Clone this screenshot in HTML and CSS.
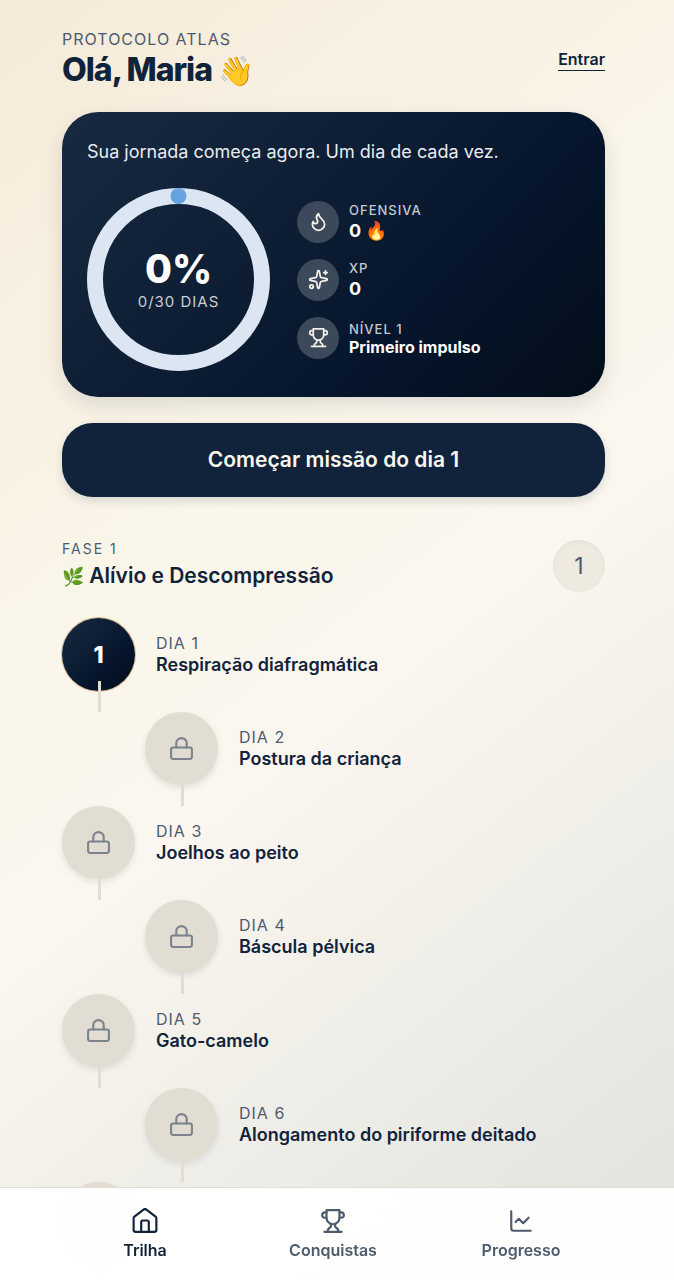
FILE: index.html
```html
<!DOCTYPE html>
<html lang="pt-BR">
<head>
<meta charset="utf-8">
<meta name="viewport" content="width=device-width, initial-scale=1">
<title>Protocolo Atlas</title>
<link rel="stylesheet" href="styles.css">
</head>
<body>
<svg class="sprite" aria-hidden="true">
  <symbol id="i-lock" viewBox="0 0 24 24"><rect x="2" y="11" width="20" height="11" rx="2"/><path d="M7 11V7a5 5 0 0 1 10 0v4"/></symbol>
  <symbol id="i-trophy" viewBox="0 0 24 24"><path d="M6 9H4.500a2.500 2.500 0 0 1 0-5H6"/><path d="M18 9h1.500a2.500 2.500 0 0 0 0-5H18"/><path d="M4 22h16"/><path d="M10 14.660V17c0 .55-.47.98-.97 1.210C7.850 18.750 7 20.240 7 22"/><path d="M14 14.660V17c0 .55.47.98.97 1.210C16.150 18.750 17 20.240 17 22"/><path d="M18 2H6v7a6 6 0 0 0 12 0V2Z"/></symbol>
  <symbol id="i-flame" viewBox="0 0 24 24"><path d="M8.500 14.500A2.500 2.500 0 0 0 11 12c0-1.380-.5-2-1-3-1.072-2.143-.224-4.054 2-6 .5 2.500 2 4.900 4 6.500 2 1.600 3 3.500 3 5.500a7 7 0 1 1-14 0c0-1.153.433-2.294 1-3a2.500 2.500 0 0 0 2.500 2.500z"/></symbol>
  <symbol id="i-sparkles" viewBox="0 0 24 24"><path d="M11.017 2.814a1 1 0 0 1 1.966 0l1.051 5.558a2 2 0 0 0 1.594 1.594l5.558 1.051a1 1 0 0 1 0 1.966l-5.558 1.051a2 2 0 0 0-1.594 1.594l-1.051 5.558a1 1 0 0 1-1.966 0l-1.051-5.558a2 2 0 0 0-1.594-1.594l-5.558-1.051a1 1 0 0 1 0-1.966l5.558-1.051a2 2 0 0 0 1.594-1.594z"/><path d="M20 2v4"/><path d="M22 4h-4"/><circle cx="4" cy="20" r="2"/></symbol>
  <symbol id="i-home" viewBox="0 0 24 24"><path d="M8.500 22v-9a1.500 1.500 0 0 1 1.500-1.500h4a1.500 1.500 0 0 1 1.500 1.500v9"/><path d="M1.500 9.500a2 2 0 0 1 .7-1.500l8.500-6.500a2 2 0 0 1 2.600 0L21.800 8a2 2 0 0 1 .7 1.500V20a2 2 0 0 1-2 2h-17a2 2 0 0 1-2-2z"/></symbol>
  <symbol id="i-chart" viewBox="0 0 24 24"><path d="M3 3v16a2 2 0 0 0 2 2h16"/><path d="m19 9-5 5-4-4-3 3"/></symbol>
</svg>

<main class="page">
  <header class="top">
    <div>
      <p class="eyebrow">Protocolo Atlas</p>
      <h1 class="greeting">Olá, Maria <span class="emoji greeting-emoji">👋</span></h1>
    </div>
    <a class="login" href="#entrar">Entrar</a>
  </header>

  <section class="card" aria-label="Resumo">
    <p class="card-text">Sua jornada começa agora. Um dia de cada vez.</p>
    <div class="summary">
      <div class="ring">
        <svg class="ring-art" viewBox="0 0 183 183" aria-hidden="true">
          <defs><linearGradient id="dot" x1="0" y1="1" x2="1" y2="0"><stop offset="0" stop-color="#4fa8e0"/><stop offset="1" stop-color="#7c9fe4"/></linearGradient></defs>
          <circle cx="91.500" cy="91.500" r="83.500" fill="none" stroke="#dce6f2" stroke-width="16"/>
          <circle cx="91.500" cy="8" r="8" fill="url(#dot)"/>
        </svg>
        <div class="ring-label">
          <strong class="percent">0%</strong>
          <span class="days">0/30 dias</span>
        </div>
      </div>
      <ul class="stats">
        <li class="stat"><span class="badge"><svg class="icon"><use href="#i-flame"/></svg></span><div><p class="stat-name">Ofensiva</p><p class="stat-value">0 <span class="emoji">🔥</span></p></div></li>
        <li class="stat"><span class="badge"><svg class="icon"><use href="#i-sparkles"/></svg></span><div><p class="stat-name">XP</p><p class="stat-value">0</p></div></li>
        <li class="stat"><span class="badge"><svg class="icon"><use href="#i-trophy"/></svg></span><div><p class="stat-name">Nível 1</p><p class="stat-value stat-title">Primeiro impulso</p></div></li>
      </ul>
    </div>
  </section>

  <button class="start" type="button">Começar missão do dia 1</button>

  <section class="phase">
    <header class="phase-head">
      <div>
        <p class="phase-name">Fase 1</p>
        <h2 class="phase-title"><span class="emoji phase-emoji">🌿</span> Alívio e Descompressão</h2>
      </div>
      <span class="phase-number">1</span>
    </header>
    <ol class="trail">
      <li class="step"><button class="node current" type="button" aria-label="Abrir dia 1">1</button><div><p class="day">Dia 1</p><h3 class="step-title">Respiração diafragmática</h3></div></li>
      <li class="step"><button class="node" type="button" aria-label="Dia 2 bloqueado"><svg class="icon"><use href="#i-lock"/></svg></button><div><p class="day">Dia 2</p><h3 class="step-title">Postura da criança</h3></div></li>
      <li class="step"><button class="node" type="button" aria-label="Dia 3 bloqueado"><svg class="icon"><use href="#i-lock"/></svg></button><div><p class="day">Dia 3</p><h3 class="step-title">Joelhos ao peito</h3></div></li>
      <li class="step"><button class="node" type="button" aria-label="Dia 4 bloqueado"><svg class="icon"><use href="#i-lock"/></svg></button><div><p class="day">Dia 4</p><h3 class="step-title">Báscula pélvica</h3></div></li>
      <li class="step"><button class="node" type="button" aria-label="Dia 5 bloqueado"><svg class="icon"><use href="#i-lock"/></svg></button><div><p class="day">Dia 5</p><h3 class="step-title">Gato-camelo</h3></div></li>
      <li class="step"><button class="node" type="button" aria-label="Dia 6 bloqueado"><svg class="icon"><use href="#i-lock"/></svg></button><div><p class="day">Dia 6</p><h3 class="step-title">Alongamento do piriforme deitado</h3></div></li>
      <li class="step"><button class="node" type="button" aria-label="Dia 7 bloqueado"><svg class="icon"><use href="#i-lock"/></svg></button></li>
    </ol>
  </section>
</main>

<nav class="tabs" aria-label="Principal">
  <a class="tab active" href="#trilha" aria-current="page"><svg class="icon"><use href="#i-home"/></svg>Trilha</a>
  <a class="tab" href="#conquistas"><svg class="icon"><use href="#i-trophy"/></svg>Conquistas</a>
  <a class="tab" href="#progresso"><svg class="icon"><use href="#i-chart"/></svg>Progresso</a>
</nav>
</body>
</html>
```
FILE: styles.css
```css
* { box-sizing: border-box; margin: 0; padding: 0; }
html { height: 100%; scrollbar-width: none; }
body {
  min-height: 100%;
  font-family: Inter, "Liberation Sans", sans-serif;
  color: #10233b;
  background: linear-gradient(142deg, #f5ead8 0%, #faf6ea 38%, #fbf6ef 54%, #dfe1dd 100%) fixed;
}
ul, ol { list-style: none; }
button { font: inherit; border: 0; cursor: pointer; }
.sprite { position: absolute; width: 0; height: 0; }
.icon { width: 21px; height: 21px; fill: none; stroke: currentColor; stroke-width: 2; stroke-linecap: round; stroke-linejoin: round; overflow: visible; }
.page { padding: 28px 69px 120px 62px; }

.top { display: flex; align-items: center; justify-content: space-between; margin-bottom: 21px; }
.eyebrow { font-size: 16px; line-height: 22px; letter-spacing: 1px; text-transform: uppercase; color: #4d5b6e; }
.greeting { font-size: 32px; line-height: 40px; font-weight: 800; letter-spacing: -1px; }
.greeting-emoji { font-size: 29px; }
.login { font-size: 16px; line-height: 22px; font-weight: 600; color: inherit; text-decoration: none; border-bottom: 1px solid currentColor; }

.card {
  padding: 26px 25px;
  border-radius: 36px;
  color: #fff;
  background: linear-gradient(135deg, #182a41 0%, #06162d 65%, #040e1b 100%);
  box-shadow: 0 8px 20px rgba(16, 35, 59, 0.12);
}
.card-text { font-size: 18px; line-height: 28px; margin-bottom: 22px; color: #e8ebee; }
.summary { display: flex; align-items: center; gap: 27px; }
.ring { display: grid; width: 183px; height: 183px; }
.ring-art, .ring-label { grid-area: 1 / 1; }
.ring-label { display: flex; flex-direction: column; align-items: center; justify-content: center; }
.percent { font-size: 39px; line-height: 44px; font-weight: 800; }
.days { font-size: 15px; line-height: 22px; letter-spacing: 1px; text-transform: uppercase; color: #c9ced5; }
.stats { display: grid; gap: 16px; }
.stat { display: flex; align-items: center; gap: 10px; }
.badge { display: grid; place-items: center; width: 42px; height: 42px; border-radius: 50%; background: #3c495b; color: #f4f1e8; }
.stat-name { font-size: 13px; line-height: 18px; font-weight: 500; letter-spacing: 1px; text-transform: uppercase; color: #c3c9d1; }
.stat-value { font-size: 18px; line-height: 24px; font-weight: 700; }
.stat-title { font-size: 16px; line-height: 18px; }

.start {
  display: block;
  width: 100%;
  margin: 26px 0 41px;
  padding: 22px;
  border-radius: 31px;
  font-size: 21px;
  line-height: 30px;
  font-weight: 600;
  color: #fbf7ec;
  background: #10233b;
  box-shadow: 0 4px 10px rgba(16, 35, 59, 0.14);
}

.phase-head { display: flex; align-items: center; justify-content: space-between; margin-bottom: 25px; }
.phase-name { font-size: 14px; line-height: 22px; letter-spacing: 2px; text-transform: uppercase; color: #4d5b6e; }
.phase-title { font-size: 21px; line-height: 32px; font-weight: 600; }
.phase-emoji { font-size: 18px; }
.phase-number { display: grid; place-items: center; width: 52px; height: 52px; border-radius: 50%; font-size: 23px; color: #4d5b6e; background: #eeeae0; box-shadow: inset 0 2px 5px rgba(16, 35, 59, 0.04); }

.step { position: relative; display: flex; align-items: center; gap: 21px; padding-bottom: 21px; }
.step:nth-child(even) { margin-left: 83px; }
.step::after { content: ""; position: absolute; left: 36px; bottom: 0; width: 3px; height: 31px; background: #e2ddd0; }
.node { display: grid; place-items: center; width: 73px; height: 73px; border-radius: 50%; color: #7c838d; background: #e1ddd2; box-shadow: 0 3px 6px rgba(16, 35, 59, 0.1); }
.node .icon { width: 25px; height: 25px; }
.current { font-size: 23px; font-weight: 800; color: #fff; background: linear-gradient(135deg, #182a41, #06162d 60%, #040e1b); box-shadow: 0 0 0 1px #dcb98c; }
.day { font-size: 16px; line-height: 20px; letter-spacing: 1px; text-transform: uppercase; color: #4d5b6e; }
.step-title { font-size: 18px; line-height: 24px; font-weight: 600; }

.tabs {
  position: fixed;
  inset: auto 0 0;
  display: grid;
  grid-template-columns: repeat(3, 1fr);
  padding: 20px 59px 19px 51px;
  border-top: 1px solid #e2ddd0;
  background: rgba(255, 255, 255, 0.96);
  backdrop-filter: blur(16px);
}
.tab { display: flex; flex-direction: column; align-items: center; gap: 5px; font-size: 16px; line-height: 22px; font-weight: 600; color: #4d5b6e; text-decoration: none; }
.tab .icon { width: 26px; height: 26px; }
.active { color: #10233b; }
```
